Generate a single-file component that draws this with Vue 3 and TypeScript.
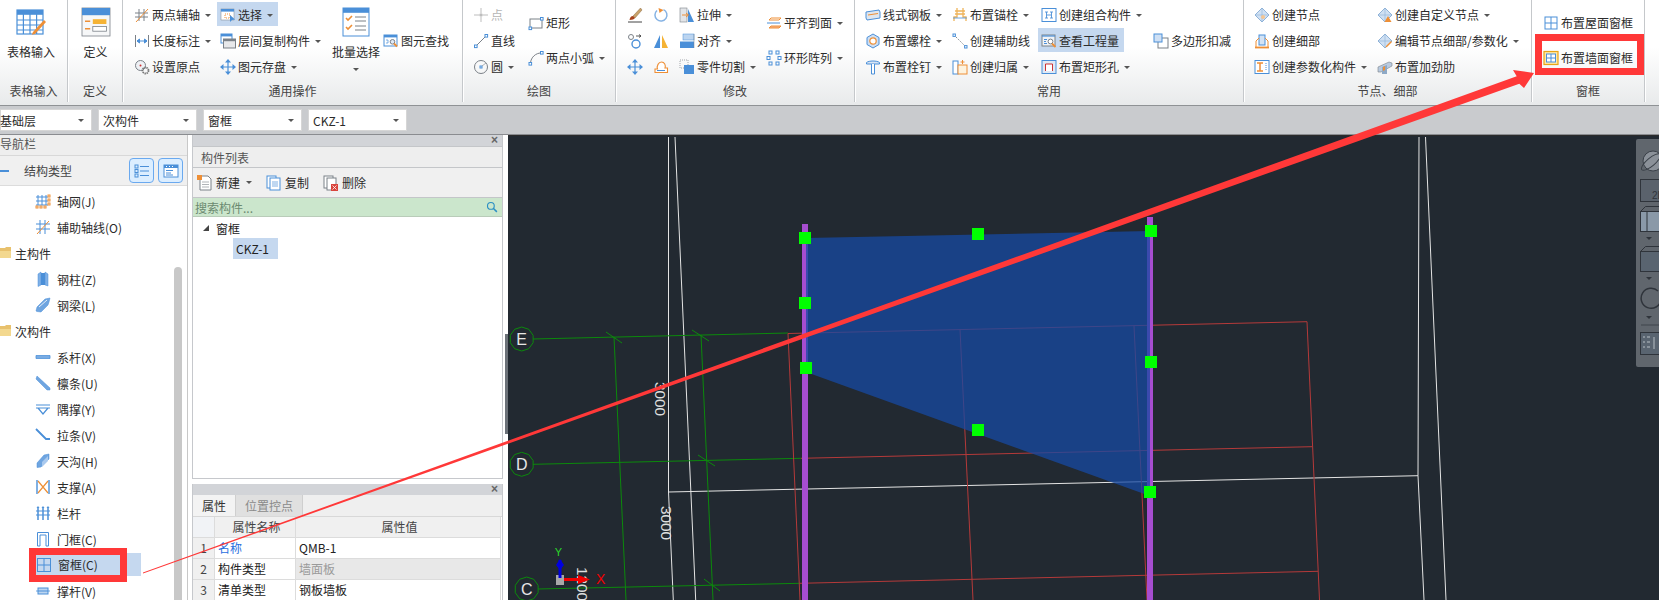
<script setup lang="ts">
interface Item { icons: string[]; label: string; caret?: boolean; active?: boolean; off?: boolean }
interface Col { w: number; kind: 'three' | 'two' | 'mid' | 'large'; items: Item[] }
interface Group { label: string; w: number; pad: number; cols: Col[] }

const b = '#4a8fd8'
const o = '#ee8f36'
const g = '#7b8188'

// 16x16 icon bodies
const ic: Record<string, string> = {
  table: `<rect x="1" y="2" width="13" height="12" fill="#fff" stroke="${b}" stroke-width=".6"/><rect x="1" y="2" width="13" height="2.4" fill="${b}"/><path d="M1 7h13M1 9.5h13M1 12h13M4.2 4v10M7.5 4v10M10.8 4v10" stroke="${b}" stroke-width=".6"/><path d="M9 13l5.5-6 1 1-5.5 6-1.6.4z" fill="${o}"/>`,
  def: `<rect x="1" y="1" width="14" height="14" fill="#f6f7f8" stroke="${g}" stroke-width=".4"/><rect x="1" y="1" width="14" height="3.6" fill="${b}"/><path d="M2.5 7.6h2.6M2.5 11.4h2.6" stroke="${o}" stroke-width=".7"/><rect x="6.4" y="6.6" width="6.8" height="2.4" fill="#f5b335"/><rect x="6.4" y="10.2" width="6.8" height="2.4" fill="#fff" stroke="${g}" stroke-width=".4"/>`,
  axis2: `<path d="M5 2v12M10 2v12M1 6h13M1 10h13" stroke="${g}"/><path d="M2 15L14 2" stroke="${o}"/>`,
  dim: `<path d="M1.5 2v12M14.5 2v12" stroke="${g}"/><path d="M3 8h10M3 8l2.5-2v4zM13 8l-2.5-2v4z" stroke="${b}" fill="${b}"/>`,
  origin: `<circle cx="6.5" cy="6.5" r="5" fill="#eef1f5" stroke="${g}"/><circle cx="6.5" cy="6.5" r="1" fill="#c33"/><circle cx="11.5" cy="11.5" r="3" fill="none" stroke="#777" stroke-width="1.8" stroke-dasharray="1.4 .7"/>`,
  select: `<rect x="1" y="2" width="13" height="11" fill="#fff" stroke="${g}" stroke-width=".5"/><rect x="1" y="2" width="13" height="2.6" fill="${b}"/><rect x="5" y="7" width="5" height="4" fill="none" stroke="${o}" stroke-dasharray="1 1"/><path d="M10 8v7l2-2 3-.5z" fill="${b}"/>`,
  copy: `<rect x="1" y="1" width="11" height="9" fill="#fff" stroke="${b}"/><rect x="1" y="1" width="11" height="2.4" fill="${b}"/><rect x="3.5" y="6" width="12" height="9" fill="#e7e8ea" stroke="${g}"/><rect x="3.5" y="6" width="12" height="2.2" fill="${g}"/>`,
  move: `<path d="M8 0l3 3.5H5zM8 16l3-3.5H5zM0 8l3.5-3v6zM16 8l-3.500-3v6z" fill="${b}"/><path d="M8 3v10M3 8h10" stroke="${b}" stroke-width="1.2"/>`,
  batch: `<rect x="1.5" y="1" width="13" height="14" fill="#fff" stroke="${b}" stroke-width=".5"/><rect x="1.5" y="1" width="13" height="2.4" fill="${b}"/><path d="M3 6l1 1 2-2M3 10.5l1 1 2-2" fill="none" stroke="${o}" stroke-width=".8"/><path d="M7.5 5.500h5.500M7.500 7.500h5.500M7.500 10h5.500M7.500 12h5.500" stroke="${g}" stroke-width=".5"/>`,
  find: `<rect x="1" y="2" width="13" height="11" fill="#fff" stroke="${b}"/><rect x="1" y="2" width="13" height="2.4" fill="${b}"/><path d="M3 7h2v3H3" fill="none" stroke="${b}" stroke-width=".7"/><circle cx="9.5" cy="8.8" r="2.3" fill="#dfeaf7" stroke="${g}"/><path d="M11 10.5l3 3" stroke="${o}" stroke-width="1.8"/>`,
  point: `<path d="M1 8h5M10 8h5M8 1v5M8 10v5" stroke="#bdbdbd"/><circle cx="8" cy="8" r="1.8" fill="#bdbdbd"/>`,
  line: `<path d="M3 13L13 3" stroke="${g}"/><rect x="1.5" y="12" width="2.6" height="2.6" fill="#fff" stroke="${b}"/><rect x="12" y="1.5" width="2.6" height="2.6" fill="#fff" stroke="${b}"/>`,
  circle: `<circle cx="8" cy="8" r="6.5" fill="none" stroke="${g}"/><rect x="7" y="7" width="2" height="2" fill="#fff" stroke="${b}"/><path d="M9 7l4-3" stroke="${g}" stroke-width=".6"/>`,
  rect: `<rect x="2" y="4" width="12" height="9" fill="none" stroke="${g}"/><rect x="12.5" y="2.5" width="2.6" height="2.6" fill="#fff" stroke="${b}"/><rect x="1" y="12" width="2.6" height="2.6" fill="#fff" stroke="${b}"/>`,
  arc: `<path d="M2.5 13C3 7 8 3 13 3" fill="none" stroke="${g}"/><rect x="1" y="12.5" width="2.6" height="2.6" fill="#fff" stroke="${b}"/><rect x="12.5" y="1.5" width="2.6" height="2.6" fill="#fff" stroke="${b}"/>`,
  brush: `<path d="M13.5 1L6 9l2 2 7-8z" fill="#c9a26a" stroke="#8a6b42" stroke-width=".5"/><path d="M6 9c-2 0-3 1.5-3.500 4 2.500 0 5-1 5.500-2z" fill="#a8431d"/><path d="M1 15h14" stroke="#444"/>`,
  rotate: `<path d="M10.5 2.600A6 6 0 1 1 4 3.500" fill="none" stroke="#86b3e4" stroke-width="1.5"/><path d="M5.5 1l5 2-4 3z" fill="${o}"/>`,
  stretch: `<rect x="1" y="1" width="7" height="14" fill="#e3e5e8" stroke="${g}" stroke-width=".6"/><path d="M15 15H9V2z" fill="${b}"/><path d="M3 8h6M7 6l2.5 2L7 10" fill="none" stroke="${o}"/>`,
  scale: `<circle cx="4" cy="4" r="2.5" fill="none" stroke="${g}"/><circle cx="9" cy="11" r="4" fill="none" stroke="${b}" stroke-width="1.4"/><path d="M9 3h5M12 1.500L14 3l-2 1.500" fill="none" stroke="#333" stroke-width=".8"/>`,
  mirror: `<path d="M7 2v13H1z" fill="${b}"/><path d="M9 2v13h6z" fill="#f5b335"/>`,
  offset: `<rect x="4" y="1" width="11" height="6" fill="#bcd5f0" stroke="${b}" stroke-width=".5"/><rect x="1" y="8.5" width="14" height="6.5" fill="${b}"/><path d="M15 1v14" stroke="${g}" stroke-width=".5"/>`,
  cloud: `<path d="M2 13.500V10h2.500c-1-3 1-7 4-7s4.500 3.500 3.500 6h2.500v4.500z" fill="#fff" stroke="${o}" stroke-width="1.1"/><path d="M4 11.5h8" stroke="${b}"/>`,
  cut: `<rect x="1" y="1" width="8" height="8" fill="none" stroke="${g}" stroke-width=".7" stroke-dasharray="1 1"/><path d="M5 6h10v9H5z" fill="${b}"/>`,
  face: `<path d="M3 5l2-2h10l-2 2z" fill="none" stroke="${o}"/><path d="M1 8h13" stroke="${b}"/><path d="M3 13l2-2h10l-2 2z" fill="#f7b48a" stroke="${o}"/>`,
  ring: `<g fill="none" stroke="${b}"><rect x="3" y="1" width="3" height="3"/><rect x="10" y="1" width="3" height="3"/><rect x="1" y="6.5" width="3" height="3"/><rect x="12" y="6.5" width="3" height="3"/><rect x="3" y="12" width="3" height="3"/><rect x="10" y="12" width="3" height="3"/></g>`,
  plate: `<path d="M1 5l13-2 1 2v6L2 13 1 11z" fill="#dfe6ee" stroke="${b}"/><path d="M3 8l10-1.500" stroke="${o}" stroke-width="1.2"/>`,
  bolt: `<path d="M8 1l6 3.500v7L8 15l-6-3.500v-7z" fill="#cfdff2" stroke="${b}"/><circle cx="8" cy="8" r="3.2" fill="#fff" stroke="${o}" stroke-width="1.2"/>`,
  stud: `<path d="M1.500 3.500C4 1.500 12 1.500 14.500 3.500V5h-13z" fill="#d8e5f4" stroke="${b}"/><path d="M6.500 5v10h3V5" fill="#fff" stroke="${b}"/>`,
  anchor: `<path d="M5 1v9H2v4M11 1v9h3v4M3 4h10M3 7h10" fill="none" stroke="#efb45a" stroke-width="1.3"/><path d="M1 11h14" stroke="${b}" stroke-width=".8"/>`,
  guide: `<path d="M2 2l12 12" stroke="${g}" stroke-dasharray="1.500 1.500"/><rect x="1" y="1" width="2.4" height="2.4" fill="#fff" stroke="${b}"/><rect x="12.6" y="12.6" width="2.4" height="2.4" fill="#fff" stroke="${b}"/>`,
  owner: `<rect x="1" y="2" width="5" height="13" fill="#fff" stroke="${b}"/><rect x="6" y="6" width="9" height="9" fill="#fdf3df" stroke="${o}"/><path d="M10.500 1v4M8.500 3h4" stroke="${o}"/>`,
  combo: `<rect x="1" y="1.500" width="14" height="13" fill="#fff" stroke="${b}"/><path d="M4 5h3M5.500 5v6M4 11h3M9 5h3M10.500 5v6M9 11h3M6 8h4" stroke="${b}" stroke-width=".9"/>`,
  qty: `<rect x="1" y="2" width="13" height="11" fill="#f0f3f7" stroke="${g}"/><rect x="1" y="2" width="13" height="2" fill="${b}" fill-opacity=".6"/><path d="M3 6.500h3M3 8.500h2M3 10.500h3" stroke="${b}"/><circle cx="9.500" cy="8.500" r="2.4" fill="#fff" stroke="${g}"/><path d="M11 10.500l3.500 3.500" stroke="${o}" stroke-width="1.8"/>`,
  hole: `<rect x="1" y="1.500" width="14" height="13" fill="#dfe9f5" stroke="${b}"/><rect x="4.500" y="5" width="7" height="7" fill="#fff"/><path d="M4.500 12V5h7v7" fill="none" stroke="#c33"/>`,
  poly: `<rect x="5" y="5" width="10" height="10" fill="#fff" stroke="${g}"/><rect x="1" y="1" width="8" height="8" fill="#cfe0f4" stroke="${b}"/>`,
  node: `<path d="M8 1l7 7-7 7-7-7z" fill="#cfe0f3" stroke="#8fb2d8"/><path d="M8 1v14M1 8h14" stroke="#8fb2d8" stroke-width=".6"/><circle cx="9" cy="10" r="2" fill="#f4c592"/>`,
  detail: `<rect x="5" y="2" width="6" height="10" fill="#d4e3f4" stroke="${b}"/><path d="M1 14.500h14" stroke="${o}" stroke-width="1.8"/><path d="M2 14V8l3-3M14 14V8l-3-3" fill="none" stroke="${o}"/>`,
  param: `<rect x="1" y="1.500" width="14" height="13" fill="#fff" stroke="${b}"/><path d="M3 4h6M3 12h6M6 4v8" stroke="${o}" stroke-width="1.5"/><path d="M12 4v8" stroke="${b}" stroke-dasharray="1 1"/>`,
  cnode: `<path d="M8 1l7 7-7 7-7-7z" fill="#cfe0f3" stroke="#8fb2d8"/><path d="M8 1v14M1 8h14" stroke="#8fb2d8" stroke-width=".6"/><path d="M11 9l3.500 6h-7z" fill="${o}"/>`,
  enode: `<path d="M8 1l7 7-7 7-7-7z" fill="#cfe0f3" stroke="#8fb2d8"/><path d="M8 1v14M1 8h14" stroke="#8fb2d8" stroke-width=".6"/><path d="M9 13l5-5 1 1-5 5-1.500.5z" fill="${o}"/>`,
  rib: `<path d="M1 8l11-5 3 1v3L4 13H1z" fill="#b9cbe0" stroke="${g}" stroke-width=".6"/><path d="M5 8v7h5V6z" fill="#8ea9c6"/><path d="M6 8l2-1v4l-2 1z" fill="${o}"/>`,
  roofw: `<rect x="2" y="2" width="12" height="12" fill="#fff" stroke="${b}"/><path d="M8 2v12M2 8h12" stroke="${b}"/>`,
  wallw: `<rect x="1" y="1.500" width="14" height="13" fill="#ffe9a8" stroke="#e8a417" stroke-width="1.2"/><rect x="3.500" y="4" width="9" height="8" fill="#fff" stroke="${b}"/><path d="M8 4v8M3.500 8h9" stroke="${b}"/>`,
  // navigation tree
  ngrid: `<path d="M3 2v10M7 2v10M11 2v10M1 4h12M1 8h12M1 12h12" stroke="${b}"/><g fill="none" stroke="${o}"><rect x="13" y="2" width="2" height="2"/><rect x="13" y="6" width="2" height="2"/><rect x="13" y="10" width="2" height="2"/><rect x="1" y="13" width="2" height="2"/><rect x="5" y="13" width="2" height="2"/><rect x="9" y="13" width="2" height="2"/></g>`,
  naux: `<path d="M5 1v14M10 1v14M1 5h14M1 10h14" stroke="${b}"/><path d="M2 15L14 2" stroke="${o}"/>`,
  ncol: `<path d="M3 3l3-2v13l-3 1.500zM10 1l3 2v12l-3-1z" fill="#7fb0e6" stroke="${b}" stroke-width=".5"/><path d="M6 2h4v12H6z" fill="#4a8fd8"/>`,
  nbeam: `<path d="M1 14l1-4 8-8 5-1-1 4-1 3-7 7-4-.5z" fill="#6fa5e0" stroke="${b}" stroke-width=".5"/><path d="M4 10l8-7" stroke="#fff" stroke-width=".8"/>`,
  ntie: `<path d="M1 6.500h14v3H1z" fill="#a9c9ee" stroke="${b}" stroke-width=".8"/><path d="M1 8h14" stroke="${b}"/>`,
  npurlin: `<path d="M2 1l13 12v2h-3L1 4z" fill="#6fa5e0" stroke="${b}" stroke-width=".5"/>`,
  nbrace: `<path d="M1 4h14M1 7h14M3 7l5 6 5-6" fill="none" stroke="${b}" stroke-width="1.2"/>`,
  nrod: `<path d="M1 2l10 10h4" fill="none" stroke="${b}" stroke-width="1.8"/>`,
  ngutter: `<path d="M2 10l7-8 5-1v5l-8 8-4 .5z" fill="#6fa5e0" stroke="${b}" stroke-width=".5"/><path d="M7 9l6-6v5l-6 6z" fill="#a9c9ee"/>`,
  nsupport: `<path d="M2 1v14M14 1v14" stroke="${b}" stroke-width="1.4"/><path d="M3 2l10 12M13 2L3 14" stroke="${o}" stroke-width="1.2"/>`,
  nrail: `<path d="M3 3v12M8 3v12M13 3v12" stroke="${b}" stroke-width="1.5"/><path d="M1 6h14M1 10h14" stroke="${b}"/><path d="M1.500 3L3 1l1.500 2M6.500 3L8 1l1.500 2M11.500 3L13 1l1.500 2" fill="${b}"/>`,
  ndoor: `<path d="M2.500 15V1.500h11V15h-2.500V4H5v11z" fill="#fff" stroke="${b}"/>`,
  nwin: `<rect x="1.500" y="1.500" width="13" height="13" fill="none" stroke="${b}"/><path d="M8 1.500v13M1.500 8h13" stroke="${b}"/>`,
  nstrut: `<path d="M1 8h14" stroke="${b}" stroke-width=".8"/><rect x="3" y="5" width="10" height="6" fill="#bcd5f0" stroke="${b}"/><path d="M3 8h10" stroke="${b}"/>`,
  folder: `<path d="M0 3h5l1-1h5v11H0z" fill="#e8c16d"/><path d="M0 6h11v7H0z" fill="#f3d88f"/>`,
  // list panel
  newf: `<path d="M3 1h8l3 3v11H3z" fill="#fff" stroke="${g}"/><path d="M5 7h7M5 9.500h7M5 12h7" stroke="${g}" stroke-width=".6"/><rect x="0" y="0" width="5" height="5" fill="${o}"/>`,
  dup: `<rect x="1" y="1" width="9" height="12" fill="#fff" stroke="${b}"/><rect x="4" y="3" width="10" height="12" fill="#fff" stroke="${b}"/><path d="M6 7h6M6 9h6M6 11h6" stroke="${b}" stroke-width=".7"/>`,
  del: `<rect x="1" y="1" width="9" height="12" fill="#fff" stroke="${g}"/><rect x="4" y="3" width="9" height="12" fill="#fff" stroke="${g}"/><rect x="8" y="9" width="7" height="7" fill="#d9453d"/><path d="M9.500 10.500l4 4M13.500 10.500l-4 4" stroke="#fff" stroke-width=".8"/>`,
  nlist: `<g fill="none" stroke="${b}"><rect x="1" y="2" width="3" height="3"/><rect x="1" y="6.500" width="3" height="3"/><rect x="1" y="11" width="3" height="3"/><path d="M6 3.500h9M6 8h9M6 12.500h9"/></g>`,
  nview: `<rect x="1" y="2" width="14" height="12" fill="#fff" stroke="${b}"/><rect x="1" y="2" width="14" height="3" fill="${b}"/><path d="M3 7.500h7M3 10h5M3 12h7" stroke="${b}"/><path d="M3 3.500h1M6 3.500h1M9 3.500h1" stroke="#fff"/>`,
}

const it = (icon: string | string[], label: string, extra: Partial<Item> = {}): Item => ({
  icons: Array.isArray(icon) ? icon : [icon],
  label,
  ...extra,
})
const caret = { caret: true }

const groups: Group[] = [
  { label: '表格输入', w: 68, pad: 0, cols: [{ w: 62, kind: 'large', items: [it('table', '表格输入')] }] },
  { label: '定义', w: 55, pad: 0, cols: [{ w: 55, kind: 'large', items: [it('def', '定义')] }] },
  {
    label: '通用操作', w: 340, pad: 11,
    cols: [
      { w: 86, kind: 'three', items: [it('axis2', '两点辅轴', caret), it('dim', '长度标注', caret), it('origin', '设置原点')] },
      { w: 109, kind: 'three', items: [it('select', '选择', { caret: true, active: true }), it('copy', '层间复制构件', caret), it('move', '图元存盘', caret)] },
      { w: 54, kind: 'large', items: [it('batch', '批量选择', caret)] },
      { w: 70, kind: 'mid', items: [it('find', '图元查找')] },
    ],
  },
  {
    label: '绘图', w: 153, pad: 10,
    cols: [
      { w: 55, kind: 'three', items: [it('point', '点', { off: true }), it('line', '直线'), it('circle', '圆', caret)] },
      { w: 85, kind: 'two', items: [it('rect', '矩形'), it('arc', '两点小弧', caret)] },
    ],
  },
  {
    label: '修改', w: 239, pad: 11,
    cols: [
      {
        w: 139, kind: 'three',
        items: [
          it(['brush', 'rotate', 'stretch'], '拉伸', caret),
          it(['scale', 'mirror', 'offset'], '对齐', caret),
          it(['move', 'cloud', 'cut'], '零件切割', caret),
        ],
      },
      { w: 85, kind: 'two', items: [it('face', '平齐到面', caret), it('ring', '环形阵列', caret)] },
    ],
  },
  {
    label: '常用', w: 389, pad: 10,
    cols: [
      { w: 87, kind: 'three', items: [it('plate', '线式钢板', caret), it('bolt', '布置螺栓', caret), it('stud', '布置栓钉', caret)] },
      { w: 89, kind: 'three', items: [it('anchor', '布置锚栓', caret), it('guide', '创建辅助线'), it('owner', '创建归属', caret)] },
      { w: 112, kind: 'three', items: [it('combo', '创建组合构件', caret), it('qty', '查看工程量', { active: true }), it('hole', '布置矩形孔', caret)] },
      { w: 88, kind: 'mid', items: [it('poly', '多边形扣减')] },
    ],
  },
  {
    label: '节点、细部', w: 288, pad: 10,
    cols: [
      { w: 123, kind: 'three', items: [it('node', '创建节点'), it('detail', '创建细部'), it('param', '创建参数化构件', caret)] },
      { w: 150, kind: 'three', items: [it('cnode', '创建自定义节点', caret), it('enode', '编辑节点细部/参数化', caret), it('rib', '布置加劲肋')] },
    ],
  },
  {
    label: '窗框', w: 113, pad: 11,
    cols: [{ w: 100, kind: 'two', items: [it('roofw', '布置屋面窗框'), it('wallw', '布置墙面窗框')] }],
  },
]

const combos = ['基础层', '次构件', '窗框', 'CKZ-1']

const tree = [
  { icon: 'ngrid', label: '轴网(J)' },
  { icon: 'naux', label: '辅助轴线(O)' },
  { icon: 'folder', label: '主构件', top: true },
  { icon: 'ncol', label: '钢柱(Z)' },
  { icon: 'nbeam', label: '钢梁(L)' },
  { icon: 'folder', label: '次构件', top: true },
  { icon: 'ntie', label: '系杆(X)' },
  { icon: 'npurlin', label: '檩条(U)' },
  { icon: 'nbrace', label: '隅撑(Y)' },
  { icon: 'nrod', label: '拉条(V)' },
  { icon: 'ngutter', label: '天沟(H)' },
  { icon: 'nsupport', label: '支撑(A)' },
  { icon: 'nrail', label: '栏杆' },
  { icon: 'ndoor', label: '门框(C)' },
  { icon: 'nwin', label: '窗框(C)', sel: true },
  { icon: 'nstrut', label: '撑杆(V)' },
]

const props = [
  { n: 1, name: '名称', value: 'QMB-1', link: true },
  { n: 2, name: '构件类型', value: '墙面板', muted: true },
  { n: 3, name: '清单类型', value: '钢板墙板' },
]

// canvas drawing, page coordinates
const greenLines = [
  [533, 339, 788, 333], [533, 464.3, 801, 458.3], [538, 589, 800, 583.3],
  [606, 332, 622, 343], [692, 330, 709, 341], [698, 455, 715, 466], [704, 579, 720, 591],
  [614, 337, 626, 600], [701, 335, 713, 600],
]
const redLines = [
  [788, 333.5, 1307, 321.7], [801, 458.3, 1312, 446.7], [800, 583.3, 1318, 571.3],
  [788, 333.5, 800, 600], [960, 329.3, 973, 600], [1134, 325.7, 1147, 600], [1307, 321.7, 1319.5, 600],
]
const whiteLines = [
  [668.5, 137, 668.5, 492], [668.5, 492, 673.3, 600], [675, 137, 695.7, 600],
  [668.5, 492, 1418, 475.7], [1419, 137, 1418, 475.7], [1418, 475.7, 1424, 600], [1425.5, 137, 1446, 600],
]
const handles = [[805, 238], [805, 303], [806, 368], [978, 234], [1151, 231], [1151, 362], [978, 430], [1150, 492]]
const axes = [
  { c: 'E', x: 521.7, y: 339 },
  { c: 'D', x: 521.7, y: 464.3 },
  { c: 'C', x: 526.7, y: 589 },
]
const octagon = (x: number, y: number, r: number) =>
  Array.from({ length: 10 }, (_, i) => {
    const a = (i * Math.PI) / 5 + Math.PI / 10
    return `${x + r * Math.cos(a)},${y + r * Math.sin(a)}`
  }).join(' ')
</script>

<template>
  <div class="app">
    <header class="ribbon">
      <section v-for="grp in groups" :key="grp.label" class="group" :style="{ width: grp.w + 'px' }">
        <div class="group-body" :style="{ paddingLeft: grp.pad + 'px' }">
          <div
            v-for="(col, ci) in grp.cols"
            :key="ci"
            class="col"
            :class="col.kind"
            :style="{ width: col.w + 'px' }"
          >
            <template v-if="col.kind === 'large'">
              <svg class="ic-large" viewBox="0 0 16 16" v-html="ic[col.items[0].icons[0]]"></svg>
              <span class="large-label">{{ col.items[0].label }}</span>
              <i v-if="col.items[0].caret" class="caret"></i>
            </template>
            <template v-else>
              <div
                v-for="item in col.items"
                :key="item.label"
                class="item"
                :class="{ active: item.active, off: item.off }"
              >
                <span class="icons">
                  <svg v-for="name in item.icons" :key="name" class="ic" viewBox="0 0 16 16" v-html="ic[name]"></svg>
                </span>
                <span class="label">{{ item.label }}</span>
                <i v-if="item.caret" class="caret"></i>
              </div>
            </template>
          </div>
        </div>
        <div class="group-label">{{ grp.label }}</div>
      </section>
    </header>

    <div class="toolbar">
      <div v-for="c in combos" :key="c" class="combo">
        <span>{{ c }}</span>
        <i class="caret"></i>
      </div>
    </div>

    <main class="main">
      <aside class="nav">
        <div class="nav-title">导航栏</div>
        <div class="nav-head">
          <i class="nav-dash"></i>
          <span class="nav-type">结构类型</span>
          <button class="nav-btn"><svg class="ic" viewBox="0 0 16 16" v-html="ic.nlist"></svg></button>
          <button class="nav-btn"><svg class="ic" viewBox="0 0 16 16" v-html="ic.nview"></svg></button>
        </div>
        <ul class="tree">
          <li v-for="row in tree" :key="row.label" class="tree-row" :class="{ top: row.top, sel: row.sel }">
            <svg class="ic-nav" viewBox="0 0 16 16" v-html="ic[row.icon]"></svg>
            <span>{{ row.label }}</span>
          </li>
        </ul>
        <div class="scrollbar"></div>
      </aside>

      <div class="panels">
        <section class="panel list">
          <div class="panel-bar"><span class="close">×</span></div>
          <div class="panel-title">构件列表</div>
          <div class="panel-tools">
            <span class="tool"><svg class="ic" viewBox="0 0 16 16" v-html="ic.newf"></svg>新建<i class="caret"></i></span>
            <span class="tool"><svg class="ic" viewBox="0 0 16 16" v-html="ic.dup"></svg>复制</span>
            <span class="tool"><svg class="ic" viewBox="0 0 16 16" v-html="ic.del"></svg>删除</span>
          </div>
          <div class="search">
            <span>搜索构件...</span>
            <svg class="search-ic" viewBox="0 0 16 16"><circle cx="6.5" cy="6.5" r="4.5" fill="none" stroke="#2b8fc4" stroke-width="1.5"/><path d="M10 10l4.500 4.500" stroke="#2b8fc4" stroke-width="2"/></svg>
          </div>
          <div class="list-body">
            <div class="list-root"><i class="tri"></i>窗框</div>
            <div class="list-leaf">CKZ-1</div>
          </div>
        </section>

        <section class="panel attrs">
          <div class="panel-bar"><span class="close">×</span></div>
          <div class="tabs">
            <span class="tab on">属性</span>
            <span class="tab">位置控点</span>
          </div>
          <div class="grid">
            <div class="cell corner"></div>
            <div class="cell head">属性名称</div>
            <div class="cell head">属性值</div>
            <template v-for="p in props" :key="p.n">
              <div class="cell num">{{ p.n }}</div>
              <div class="cell" :class="{ link: p.link }">{{ p.name }}</div>
              <div class="cell" :class="{ muted: p.muted }">{{ p.value }}</div>
            </template>
          </div>
        </section>
      </div>

      <div class="gutter"><i class="gutter-handle"></i></div>

      <div class="canvas">
        <svg class="drawing" viewBox="508 135 1151 465">
          <line v-for="(l, i) in whiteLines" :key="'w' + i" :x1="l[0]" :y1="l[1]" :x2="l[2]" :y2="l[3]" stroke="#e4e4e4" />
          <line v-for="(l, i) in greenLines" :key="'g' + i" :x1="l[0]" :y1="l[1]" :x2="l[2]" :y2="l[3]" stroke="#0c8a0c" />
          <line v-for="(l, i) in redLines" :key="'r' + i" :x1="l[0]" :y1="l[1]" :x2="l[2]" :y2="l[3]" stroke="#b53a3a" />
          <rect x="802" y="224" width="6" height="376" fill="#a64dd0" />
          <rect x="1147" y="217" width="6" height="383" fill="#a64dd0" />
          <polygon points="806,238 1150,231 1150,496 806,372" fill="#1749a3" opacity="0.75" />
          <rect v-for="(h, i) in handles" :key="'h' + i" :x="h[0] - 6" :y="h[1] - 6" width="12" height="12" fill="#00ff00" />
          <g v-for="a in axes" :key="a.c">
            <polygon :points="octagon(a.x, a.y, 12)" fill="none" stroke="#0c8a0c" />
            <text :x="a.x" :y="a.y + 6" class="axis">{{ a.c }}</text>
          </g>
          <text transform="translate(655 382) rotate(90)" class="dim" textLength="34" lengthAdjust="spacingAndGlyphs">3000</text>
          <text transform="translate(661 506) rotate(90)" class="dim" textLength="34" lengthAdjust="spacingAndGlyphs">3000</text>
          <text transform="translate(577 567) rotate(90)" class="dim" textLength="34" lengthAdjust="spacingAndGlyphs">1200</text>
          <!-- ucs marker -->
          <rect x="556" y="575" width="8" height="10" fill="#a8a8a8" />
          <path d="M560 578v-18" stroke="#0000e0" stroke-width="3" />
          <path d="M560 559l4 6-4 5-4-5z" fill="#0000e0" />
          <path d="M564 579.500h17" stroke="#f00000" stroke-width="3" />
          <path d="M578 575l12 4.500-12 4.500z" fill="#f00000" />
          <text x="596" y="584" class="ucs-x">X</text>
          <text x="558.500" y="556" class="ucs-y">Y</text>
        </svg>
        <div class="view-tools">
          <svg viewBox="0 0 23 228" width="23" height="228">
            <circle cx="17" cy="22" r="10" fill="#8b9199" stroke="#3a4048" />
            <ellipse cx="15" cy="23" rx="12" ry="4" fill="none" stroke="#3a4048" transform="rotate(-40 15 23)" />
            <rect x="4.500" y="40.500" width="30" height="22" fill="#5a626c" stroke="#2f343b" />
            <text x="16" y="60" class="view-2d">2D</text>
            <rect x="4.500" y="72.500" width="30" height="20" fill="#8a99a8" stroke="#2f343b" />
            <path d="M4.500 72.500l5-5h25M11 72v20" fill="none" stroke="#2f343b" />
            <path d="M10 98h6l-3 3z" fill="#2f343b" />
            <rect x="4.500" y="112.500" width="30" height="20" fill="#596470" stroke="#2f343b" />
            <path d="M4.500 112.500l5-5h25" fill="none" stroke="#2f343b" />
            <path d="M10 138h6l-3 3z" fill="#2f343b" />
            <path d="M22 152a10 10 0 1 0 3 9" fill="none" stroke="#2f343b" stroke-width="1.5" />
            <path d="M10 177h6l-3 3z" fill="#2f343b" />
            <path d="M5 186h30" stroke="#3f454c" />
            <rect x="4.500" y="193.500" width="30" height="22" fill="#596470" stroke="#2f343b" />
            <path d="M7 198h2M7 203h2M7 208h2M11 198h3M11 203h3M11 208h3M18 198v12" stroke="#cfd5da" stroke-width=".8" />
          </svg>
        </div>
      </div>
    </main>

    <!-- hand-drawn callouts on top of the screenshot -->
    <svg class="callouts" viewBox="0 0 1659 600">
      <rect x="32.500" y="551.500" width="91" height="27" fill="none" stroke="#ff3838" stroke-width="7" />
      <rect x="1538.500" y="37.500" width="102" height="34" fill="none" stroke="#ff3838" stroke-width="7" />
      <polygon points="143,572.500 1516.700,76.200 1513,70 1534,73 1524,88 1519.300,83.800 143,573.500" fill="#ff3838" />
    </svg>
  </div>
</template>

<style scoped>
.app {
  position: relative;
  width: 1659px;
  height: 600px;
  overflow: hidden;
  font-family: "Noto Sans CJK SC", "Liberation Sans", sans-serif;
  font-size: 12px;
  color: #2b2b2b;
  background: #fff;
}

/* ribbon */
.ribbon {
  display: flex;
  height: 105px;
  background: linear-gradient(#fff 45%, #e8eaeb);
  box-sizing: border-box;
}
.group {
  flex: none;
  box-sizing: border-box;
  height: 102px;
  border-right: 1px solid #c5c8cb;
  box-shadow: 1px 0 0 #fff;
}
.group-body {
  display: flex;
  height: 80px;
  box-sizing: border-box;
  padding-top: 2px;
}
.group-label {
  height: 22px;
  line-height: 22px;
  text-align: center;
  color: #444;
}
.col {
  flex: none;
  display: flex;
  flex-direction: column;
}
.col.two {
  padding-top: 8px;
  gap: 9px;
}
.col.mid {
  padding-top: 26px;
}
.col.large {
  align-items: center;
  padding-top: 4px;
}
.ic-large {
  width: 32px;
  height: 32px;
  flex: none;
}
.large-label {
  margin-top: 5px;
  line-height: 18px;
  white-space: nowrap;
}
.col.large .caret {
  margin: 7px 0 0;
}
.item {
  display: flex;
  align-items: center;
  flex: none;
  height: 26px;
  width: max-content;
  white-space: nowrap;
}
.label {
  padding-bottom: 2px;
}
.item.active {
  margin-left: -3px;
  padding: 0 5px 0 3px;
  background: linear-gradient(#c5d8ef, #c5d8ef) no-repeat 0 0 / 100% 24px;
}
.item.off {
  color: #b5b5b5;
}
.icons {
  display: flex;
  gap: 10px;
  margin-right: 2px;
}
.ic {
  display: block;
  width: 16px;
  height: 16px;
  flex: none;
}
.caret {
  display: inline-block;
  flex: none;
  width: 0;
  height: 0;
  margin-left: 5px;
  border-left: 3px solid transparent;
  border-right: 3px solid transparent;
  border-top: 3px solid #555;
}

/* combo strip */
.toolbar {
  display: flex;
  gap: 6px;
  height: 30px;
  box-sizing: border-box;
  padding-top: 3px;
  background: #c9cbce;
  border-top: 1px solid #8f9295;
  border-bottom: 1px solid #8a8c90;
}
.combo {
  display: flex;
  align-items: center;
  justify-content: space-between;
  width: 99px;
  height: 22px;
  box-sizing: border-box;
  padding: 0 7px 0 4px;
  background: #fff;
  border: 1px solid #d6d6d6;
}
.combo:first-child {
  width: 92px;
  padding-left: 0;
  text-indent: -1px;
}

/* body */
.main {
  display: flex;
  height: 465px;
}
.nav {
  position: relative;
  flex: none;
  width: 188px;
  box-sizing: border-box;
  border-right: 1px solid #c8c8c8;
  background: #fff;
  overflow: hidden;
}
.nav-title {
  height: 20px;
  line-height: 18px;
  background: #eee;
  color: #555;
}
.nav-head {
  display: flex;
  align-items: center;
  height: 31px;
  background: #f0f0f0;
  border-top: 1px solid #d8d8d8;
  border-bottom: 1px solid #dcdcdc;
  box-sizing: border-box;
}
.nav-dash {
  flex: none;
  width: 9px;
  height: 2px;
  background: #4a8fd8;
}
.nav-type {
  margin-left: 15px;
  width: 107px;
  color: #444;
}
.nav-btn {
  flex: none;
  display: flex;
  align-items: center;
  justify-content: center;
  width: 25px;
  height: 25px;
  margin-right: 4px;
  padding: 0;
  background: #dceeff;
  border: 1px solid #6aa9ef;
  border-radius: 4px;
}
.tree {
  list-style: none;
  margin: 0;
  padding: 2px 0 0;
}
.tree-row {
  display: flex;
  align-items: center;
  height: 26px;
  padding-left: 35px;
  box-sizing: border-box;
}
.tree-row.top {
  padding-left: 0;
}
.tree-row.top .ic-nav {
  margin-right: -1px;
}
.ic-nav {
  flex: none;
  width: 16px;
  height: 16px;
  margin-right: 6px;
}
.tree-row.sel {
  margin-left: 36px;
  padding-left: 0;
  width: 105px;
  height: 23px;
  margin-top: 1px;
  margin-bottom: 2px;
  background: #c5d8ef;
}
.scrollbar {
  position: absolute;
  right: 5px;
  top: 132px;
  bottom: 0;
  width: 8px;
  background: #c8c8c8;
  border-radius: 4px 4px 0 0;
}
.panels {
  flex: none;
  display: flex;
  flex-direction: column;
  width: 311px;
  margin-left: 4px;
}
.panel {
  box-sizing: border-box;
  border-left: 1px solid #c6c8cc;
  border-right: 1px solid #c6c8cc;
}
.list {
  height: 344px;
  border-bottom: 1px solid #c6c8cc;
}
.attrs {
  margin-top: 5px;
  flex: 1;
  overflow: hidden;
}
.panel-bar {
  display: flex;
  justify-content: flex-end;
  align-items: center;
  height: 11px;
  padding-right: 4px;
  background: #d2d4d8;
}
.close {
  font-size: 12px;
  line-height: 11px;
  color: #666;
  font-family: "Liberation Sans", sans-serif;
  font-weight: bold;
}
.panel-title {
  height: 22px;
  line-height: 21px;
  padding-left: 8px;
  background: #eee;
  color: #555;
  border-top: 1px solid #c4c6c9;
  border-bottom: 1px solid #c4c6c9;
  box-sizing: border-box;
}
.panel-tools {
  display: flex;
  align-items: center;
  height: 30px;
  padding-left: 4px;
  background: #f0f0f0;
  border-bottom: 1px solid #c4c6c9;
  box-sizing: border-box;
}
.tool {
  display: flex;
  align-items: center;
  gap: 3px;
  margin-right: 14px;
}
.tool .caret {
  margin-left: 3px;
}
.search {
  display: flex;
  align-items: center;
  justify-content: space-between;
  height: 19px;
  padding: 0 4px 0 2px;
  background: #cbe6cc;
  border-bottom: 1px solid #b9ccb9;
  color: #6b8a70;
  box-sizing: border-box;
}
.search-ic {
  width: 12px;
  height: 12px;
}
.list-body {
  padding-top: 1px;
}
.list-root {
  display: flex;
  align-items: center;
  height: 20px;
  padding-left: 10px;
  color: #222;
}
.tri {
  width: 0;
  height: 0;
  margin-right: 7px;
  border-left: 6px solid transparent;
  border-bottom: 6px solid #444;
}
.list-leaf {
  margin-left: 40px;
  width: 45px;
  height: 21px;
  line-height: 21px;
  padding-left: 3px;
  box-sizing: border-box;
  background: #c5d8ef;
  color: #222;
}
.tabs {
  display: flex;
  height: 22px;
  background: #efefef;
  border-bottom: 1px solid #d8d8d8;
  box-sizing: border-box;
}
.tab {
  padding: 0 9px;
  line-height: 22px;
  background: #e0e0e0;
  color: #8a8a8a;
  border-right: 1px solid #cfcfcf;
}
.tab.on {
  background: #f3f3f3;
  color: #333;
}
.grid {
  display: grid;
  grid-template-columns: 22px 81px 205px;
  grid-auto-rows: 21px;
}
.cell {
  line-height: 20px;
  padding-left: 3px;
  white-space: nowrap;
  border-right: 1px solid #dcdcdc;
  border-bottom: 1px solid #dcdcdc;
  box-sizing: border-box;
  color: #222;
}
.corner {
  background: #f1f3f6;
}
.head {
  background: #f0f0f0;
  color: #444;
  text-align: center;
}
.num {
  background: #f0f0f0;
  text-align: center;
  padding-left: 0;
  color: #444;
}
.link {
  color: #2a6fe0;
}
.muted {
  color: #9a9a9a;
  background: #e8e8e8;
}
.gutter {
  position: relative;
  flex: none;
  width: 5px;
  background: #fff;
}
.gutter-handle {
  position: absolute;
  left: 2px;
  top: 199px;
  width: 3px;
  height: 100px;
  background: #6b7178;
}
.canvas {
  position: relative;
  flex: 1;
  background: #222931;
  border-top: 1px solid #2b2b2b;
  box-sizing: border-box;
  overflow: hidden;
}
.drawing {
  position: absolute;
  left: 0;
  top: -1px;
  width: 1151px;
  height: 465px;
}
.axis {
  fill: #e6e6e6;
  font-family: "Liberation Sans", sans-serif;
  font-size: 16px;
  text-anchor: middle;
}
.dim {
  fill: #dedede;
  font-family: "Liberation Sans", sans-serif;
  font-size: 15px;
}
.ucs-x {
  fill: #f00000;
  font-family: "Liberation Sans", sans-serif;
  font-size: 14px;
}
.ucs-y {
  fill: #2ad52a;
  font-family: "Liberation Sans", sans-serif;
  font-size: 11px;
  text-anchor: middle;
}
.view-tools {
  position: absolute;
  left: 1128px;
  top: 3px;
  width: 23px;
  height: 228px;
  background: #60666d;
  border-radius: 2px 0 0 2px;
}
.view-2d {
  fill: #2f343b;
  font-family: "Liberation Sans", sans-serif;
  font-size: 10px;
}
.callouts {
  position: absolute;
  left: 0;
  top: 0;
  width: 1659px;
  height: 600px;
  pointer-events: none;
}
</style>
